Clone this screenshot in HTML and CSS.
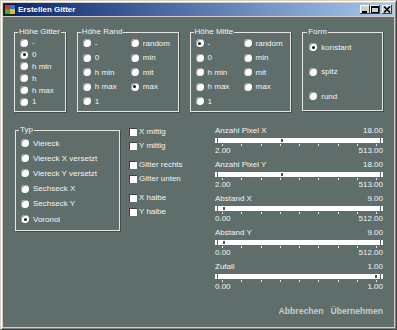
FILE: index.html
```html
<!DOCTYPE html>
<html lang="de">
<head>
    <meta charset="UTF-8">
    <title>Erstellen Gitter</title>
    <link rel="stylesheet" href="styles.css">
</head>
<body>
    <div class="window">
        <div class="titlebar">
            <svg class="appicon" width="12" height="11" viewBox="0 0 12 11">
                <rect x="0" y="0" width="12" height="11" fill="#1c1c1c"/>
                <rect x="1" y="1" width="5" height="4" fill="#e03020"/>
                <rect x="6" y="1" width="5" height="4" fill="#3070e0"/>
                <rect x="1" y="5" width="5" height="5" fill="#30b040"/>
                <rect x="6" y="5" width="5" height="5" fill="#e0c020"/>
            </svg>
            <span class="title">Erstellen Gitter</span>
            <div class="ctl">
                <span class="ctlbtn"><svg width="10" height="9" viewBox="0 0 10 9"><rect x="2" y="6" width="5" height="2" fill="#000"/></svg></span>
                <span class="ctlbtn"><svg width="10" height="9" viewBox="0 0 10 9"><rect x="1.5" y="1.5" width="7" height="6" fill="none" stroke="#000"/><rect x="1" y="1" width="8" height="2" fill="#000"/></svg></span>
                <span class="ctlbtn close"><svg width="10" height="9" viewBox="0 0 10 9"><path d="M2 1.5 L8 7.5 M8 1.5 L2 7.5" stroke="#000" stroke-width="1.6"/></svg></span>
            </div>
        </div>

        <div class="client">
            <div class="toprow">
                <fieldset class="grp g-gitter">
                    <legend>Höhe Gitter</legend>
                    <div class="opts one">
                        <label class="opt"><span class="radio"></span>-</label>
                        <label class="opt"><span class="radio on"></span>0</label>
                        <label class="opt"><span class="radio"></span>h min</label>
                        <label class="opt"><span class="radio"></span>h</label>
                        <label class="opt"><span class="radio"></span>h max</label>
                        <label class="opt"><span class="radio"></span>1</label>
                    </div>
                </fieldset>
                <fieldset class="grp g-wide">
                    <legend>Höhe Rand</legend>
                    <div class="opts two">
                        <label class="opt"><span class="radio"></span>-</label>
                        <label class="opt"><span class="radio"></span>random</label>
                        <label class="opt"><span class="radio"></span>0</label>
                        <label class="opt"><span class="radio"></span>min</label>
                        <label class="opt"><span class="radio"></span>h min</label>
                        <label class="opt"><span class="radio"></span>mit</label>
                        <label class="opt"><span class="radio"></span>h max</label>
                        <label class="opt"><span class="radio on"></span>max</label>
                        <label class="opt"><span class="radio"></span>1</label>
                    </div>
                </fieldset>
                <fieldset class="grp g-wide">
                    <legend>Höhe Mitte</legend>
                    <div class="opts two">
                        <label class="opt"><span class="radio on"></span>-</label>
                        <label class="opt"><span class="radio"></span>random</label>
                        <label class="opt"><span class="radio"></span>0</label>
                        <label class="opt"><span class="radio"></span>min</label>
                        <label class="opt"><span class="radio"></span>h min</label>
                        <label class="opt"><span class="radio"></span>mit</label>
                        <label class="opt"><span class="radio"></span>h max</label>
                        <label class="opt"><span class="radio"></span>max</label>
                        <label class="opt"><span class="radio"></span>1</label>
                    </div>
                </fieldset>
                <fieldset class="grp g-form">
                    <legend>Form</legend>
                    <div class="opts form">
                        <label class="opt"><span class="radio on"></span>konstant</label>
                        <label class="opt"><span class="radio"></span>spitz</label>
                        <label class="opt"><span class="radio"></span>rund</label>
                    </div>
                </fieldset>
            </div>

            <div class="bottomrow">
                <fieldset class="grp g-typ">
                    <legend>Typ</legend>
                    <div class="opts typ">
                        <label class="opt"><span class="radio"></span>Viereck</label>
                        <label class="opt"><span class="radio"></span>Viereck X versetzt</label>
                        <label class="opt"><span class="radio"></span>Viereck Y versetzt</label>
                        <label class="opt"><span class="radio"></span>Sechseck X</label>
                        <label class="opt"><span class="radio"></span>Sechseck Y</label>
                        <label class="opt"><span class="radio on"></span>Voronoi</label>
                    </div>
                </fieldset>

                <div class="checks">
                    <div class="pair">
                        <label class="chk"><span class="box"></span>X mittig</label>
                        <label class="chk"><span class="box"></span>Y mittig</label>
                    </div>
                    <div class="pair">
                        <label class="chk"><span class="box"></span>Gitter rechts</label>
                        <label class="chk"><span class="box"></span>Gitter unten</label>
                    </div>
                    <div class="pair">
                        <label class="chk"><span class="box"></span>X halbe</label>
                        <label class="chk"><span class="box"></span>Y halbe</label>
                    </div>
                </div>

                <div class="sliders">
                    <div class="slider">
                        <div class="srow"><span>Anzahl Pixel X</span><span>18.00</span></div>
                        <div class="track"><span class="cap"></span><span class="bar"><span class="thumb" style="left:39%"></span></span><span class="cap"></span></div>
                        <div class="ticks"><i></i><i></i><i></i><i></i><i></i><i></i><i></i><i></i><i></i></div>
                        <div class="srow"><span>2.00</span><span>513.00</span></div>
                    </div>
                    <div class="slider">
                        <div class="srow"><span>Anzahl Pixel Y</span><span>18.00</span></div>
                        <div class="track"><span class="cap"></span><span class="bar"><span class="thumb" style="left:39%"></span></span><span class="cap"></span></div>
                        <div class="ticks"><i></i><i></i><i></i><i></i><i></i><i></i><i></i><i></i><i></i></div>
                        <div class="srow"><span>2.00</span><span>513.00</span></div>
                    </div>
                    <div class="slider">
                        <div class="srow"><span>Abstand X</span><span>9.00</span></div>
                        <div class="track"><span class="cap"></span><span class="bar"><span class="thumb" style="left:3%"></span></span><span class="cap"></span></div>
                        <div class="ticks"><i></i><i></i><i></i><i></i><i></i><i></i><i></i><i></i><i></i></div>
                        <div class="srow"><span>0.00</span><span>512.00</span></div>
                    </div>
                    <div class="slider">
                        <div class="srow"><span>Abstand Y</span><span>9.00</span></div>
                        <div class="track"><span class="cap"></span><span class="bar"><span class="thumb" style="left:3%"></span></span><span class="cap"></span></div>
                        <div class="ticks"><i></i><i></i><i></i><i></i><i></i><i></i><i></i><i></i><i></i></div>
                        <div class="srow"><span>0.00</span><span>512.00</span></div>
                    </div>
                    <div class="slider">
                        <div class="srow"><span>Zufall</span><span>1.00</span></div>
                        <div class="track"><span class="cap"></span><span class="bar"><span class="thumb" style="left:97%"></span></span><span class="cap"></span></div>
                        <div class="ticks"><i></i><i></i><i></i><i></i><i></i><i></i><i></i><i></i><i></i></div>
                        <div class="srow"><span>0.00</span><span>1.00</span></div>
                    </div>
                </div>
            </div>

            <div class="actions">
                <span class="action">Abbrechen</span>
                <span class="action">Übernehmen</span>
            </div>
        </div>
    </div>
</body>
</html>
```

FILE: styles.css
```css
html, body {
    margin: 0;
    padding: 0;
}
body {
    font-family: "Liberation Sans", Arial, sans-serif;
    font-size: 8px;
    color: #f4f4f4;
    background: #d4d0c8;
}
.window {
    box-sizing: border-box;
    width: 397px;
    height: 330px;
    display: flex;
    flex-direction: column;
    padding: 2px;
    background: #d4d0c8;
    border: 1px solid;
    border-color: #d4d0c8 #404040 #404040 #d4d0c8;
    box-shadow: inset 1px 1px 0 #fff, inset -1px -1px 0 #808080;
}

/* title bar */
.titlebar {
    height: 13px;
    margin-bottom: 1px;
    display: flex;
    align-items: center;
    padding: 0 2px 0 0;
    background: linear-gradient(to right, #0a246a, #a6caf0);
}
.appicon {
    margin: 0 2px 0 1px;
}
.title {
    font-weight: bold;
    color: #fff;
    flex: 1;
}
.ctl {
    display: flex;
}
.ctlbtn {
    width: 10px;
    height: 9px;
    background: #d4d0c8;
    box-shadow: inset -1px -1px 0 #404040, inset 1px 1px 0 #fff;
    display: flex;
}
.ctlbtn.close {
    margin-left: 2px;
}

/* client area */
.client {
    flex: 1;
    background: #5f6e6b;
    padding: 10px 11px 0 11px;
    display: flex;
    flex-direction: column;
}
.toprow {
    display: flex;
    gap: 11px;
}
.grp {
    margin: 0;
    padding: 0 0 0 5px;
    border: 1px solid #e4e6e6;
    box-shadow: 1px 1px 0 rgba(0, 0, 0, .3);
    box-sizing: border-box;
    min-width: 0;
}
.grp legend {
    padding: 0 1px;
    margin-left: -2px;
    line-height: 10px;
    color: #f4f4f4;
}
.g-gitter { width: 52px; height: 85px; }
.g-wide { width: 102px; height: 85px; }
.g-form { width: 81px; height: 84px; padding-left: 6px; }
.g-typ { width: 105px; height: 106px; margin-left: 1px; }

.opts {
    display: grid;
}
.opts.one { grid-auto-rows: 11.8px; }
.opts.two {
    grid-template-columns: 48px auto;
    grid-auto-rows: 14.5px;
    margin-top: -1px;
}
.opts.form {
    grid-auto-rows: 20px;
    row-gap: 4.5px;
}
.opts.typ {
    grid-auto-rows: 15.2px;
    margin-top: 0.5px;
}
.opt {
    display: flex;
    align-items: center;
    white-space: nowrap;
}
.radio {
    width: 8px;
    height: 8px;
    border-radius: 50%;
    background: #fff;
    box-shadow: inset 1px 1px 0 #9a9a9a;
    margin-right: 4px;
    position: relative;
    flex: none;
}
.radio.on::after {
    content: "";
    position: absolute;
    left: 2.5px;
    top: 2.5px;
    width: 3px;
    height: 3px;
    border-radius: 50%;
    background: #111;
}

/* lower part */
.bottomrow {
    display: flex;
    margin-top: 13px;
}
.checks {
    margin-left: 8px;
    margin-top: -1px;
    display: flex;
    flex-direction: column;
    gap: 5px;
}
.chk {
    height: 14px;
    display: flex;
    align-items: center;
    white-space: nowrap;
}
.box {
    width: 9px;
    height: 9px;
    background: #fff;
    box-shadow: inset 1px 1px 0 #6a6a6a, inset 2px 2px 0 #404040;
    margin-right: 2px;
}
.sliders {
    margin-left: auto;
    margin-top: 1px;
    width: 168px;
}
.slider {
    height: 34px;
}
.srow {
    height: 10px;
    line-height: 10px;
    display: flex;
    justify-content: space-between;
}
.track {
    display: flex;
    gap: 1px;
    height: 5px;
    margin-top: 2px;
}
.cap {
    width: 2px;
    background: #fff;
}
.bar {
    flex: 1;
    background: #fff;
    position: relative;
}
.thumb {
    position: absolute;
    top: 1px;
    width: 2px;
    height: 3px;
    background: #4c5452;
}
.ticks {
    height: 3px;
    display: flex;
    justify-content: space-between;
    padding: 0 6px 0 7px;
}
.ticks i {
    width: 1px;
    height: 2px;
    margin-top: 1px;
    background: #e8e8e8;
}

.actions {
    display: flex;
    justify-content: flex-end;
    gap: 7px;
    margin-top: auto;
    margin-bottom: 11px;
}
.action {
    font-weight: bold;
    font-size: 8.6px;
    color: #c9cdcc;
}
```
